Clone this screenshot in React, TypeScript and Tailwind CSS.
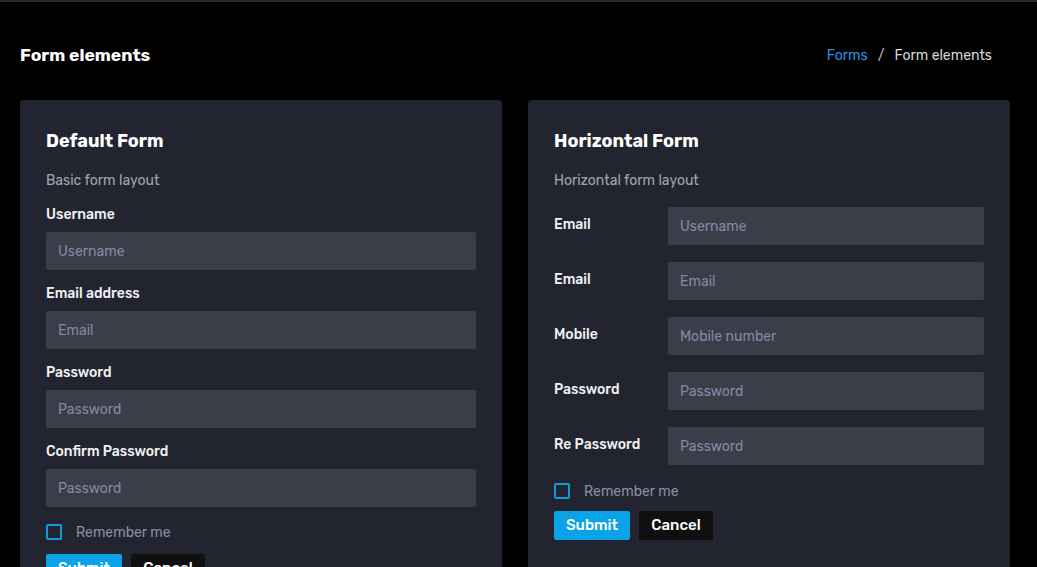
import React from 'react'

const font = { fontFamily: 'Rubik, Inter, "Noto Sans", sans-serif' }

function Field({ label, placeholder }: { label: string; placeholder: string }) {
  return (
    <div className="mt-[13px] first:mt-[14px]">
      <label className="block text-[14px] leading-5 font-medium text-[#f1f2f4] translate-y-[1px]">{label}</label>
      <input
        placeholder={placeholder}
        className="mt-2 block h-[38px] w-full rounded-[2px] bg-[#393e49] px-3 text-[14px] text-white outline-none placeholder:text-[#8489a3]"
      />
    </div>
  )
}

function Row({ label, placeholder }: { label: string; placeholder: string }) {
  return (
    <div className="flex items-start mt-[17px]">
      <label className="w-[114px] shrink-0 pt-2 text-[14px] leading-5 font-medium text-[#f1f2f4]">{label}</label>
      <input
        placeholder={placeholder}
        className="block h-[38px] flex-1 rounded-[2px] bg-[#393e49] px-3 text-[14px] text-white outline-none placeholder:text-[#8489a3]"
      />
    </div>
  )
}

function Remember() {
  return (
    <label className="flex h-5 items-center gap-[14px]">
      <span className="block h-4 w-4 rounded-[2px] border-2 border-[#0d9be0]" />
      <span className="text-[14px] text-[#8a8ea5]">Remember me</span>
    </label>
  )
}

function Buttons() {
  return (
    <div className="flex gap-[9px]">
      <button className="h-[29px] w-[76px] rounded-[2px] bg-[#0ba3e8] text-[15px] font-medium text-white">Submit</button>
      <button className="h-[29px] w-[74px] rounded-[2px] bg-[#101010] text-[15px] font-medium text-white">Cancel</button>
    </div>
  )
}

function CardHead({ title, sub }: { title: string; sub: string }) {
  return (
    <>
      <h2 className="text-[18px] leading-6 font-bold text-white translate-y-[1px]">{title}</h2>
      <p className="mt-[18px] text-[14px] leading-5 text-[#a2a6b0] translate-y-[1px]">{sub}</p>
    </>
  )
}

export default function App() {
  return (
    <div className="min-h-screen bg-black" style={font}>
      <div className="h-[2px] bg-[#252833]" />
      <div className="pl-5 pr-[27px]">
        <div className="flex items-center justify-between pt-10 pr-[18px]">
          <h1 className="text-[17.5px] leading-6 font-bold text-white translate-y-[1px]">Form elements</h1>
          <div className="flex items-center gap-[10px] text-[14px] translate-y-[1px]">
            <span className="text-[#2393e6]">Forms</span>
            <span className="text-[#bbbbbb]">/</span>
            <span className="text-[#d6d6d6]">Form elements</span>
          </div>
        </div>

        <div className="mt-[34px] grid grid-cols-2 gap-[26px]">
          {/* default form */}
          <div className="rounded-[4px] bg-[#22252f] px-[26px] pt-7 pb-6">
            <CardHead title="Default Form" sub="Basic form layout" />
            <div>
              <Field label="Username" placeholder="Username" />
              <Field label="Email address" placeholder="Email" />
              <Field label="Password" placeholder="Password" />
              <Field label="Confirm Password" placeholder="Password" />
            </div>
            <div className="mt-[15px]">
              <Remember />
            </div>
            <div className="mt-3">
              <Buttons />
            </div>
          </div>

          {/* horizontal form */}
          <div className="rounded-[4px] bg-[#22252f] px-[26px] pt-7 pb-6">
            <CardHead title="Horizontal Form" sub="Horizontal form layout" />
            <div>
              <Row label="Email" placeholder="Username" />
              <Row label="Email" placeholder="Email" />
              <Row label="Mobile" placeholder="Mobile number" />
              <Row label="Password" placeholder="Password" />
              <Row label="Re Password" placeholder="Password" />
            </div>
            <div className="mt-4">
              <Remember />
            </div>
            <div className="mt-[10px]">
              <Buttons />
            </div>
          </div>
        </div>
      </div>
    </div>
  )
}
